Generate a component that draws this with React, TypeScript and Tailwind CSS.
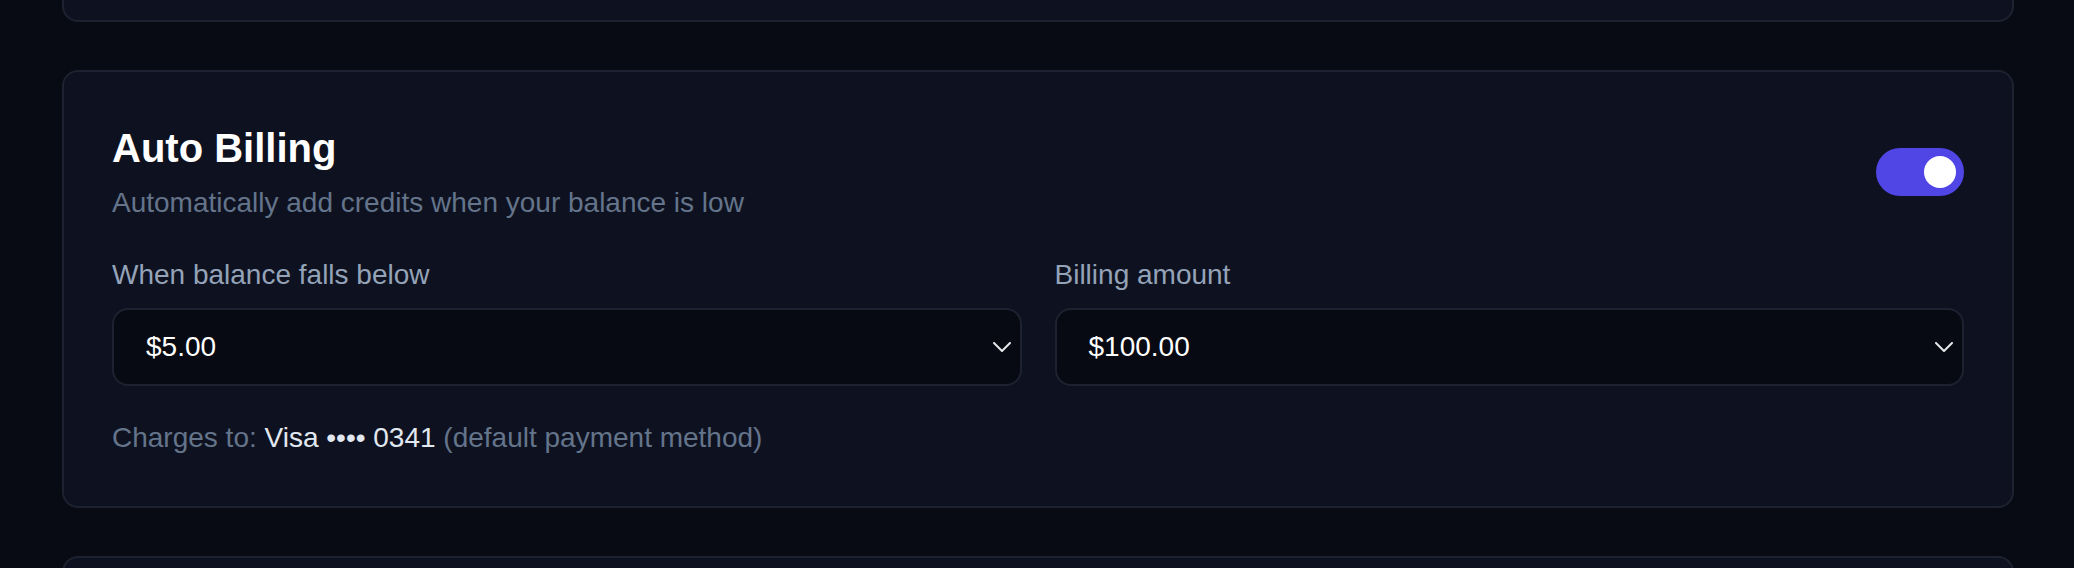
import React from "react";

function Chevron() {
  return (
    <svg width="18" height="10" viewBox="0 0 18 10" fill="none" className="shrink-0">
      <polyline points="1,1 9,9 17,1" stroke="#e5e7eb" strokeWidth="2" strokeLinecap="round" strokeLinejoin="round" />
    </svg>
  );
}

function SelectBox({ label, value }: { label: string; value: string }) {
  return (
    <div>
      <div className="mb-[13px] text-[28px] leading-[40px] text-[#94a3b8]">{label}</div>
      <div className="flex h-[78px] items-center justify-between rounded-[16px] border-2 border-[#1e2230] bg-[#070a12] pl-[32px] pr-[9px]">
        <span className="text-[28px] leading-[40px] text-white">{value}</span>
        <Chevron />
      </div>
    </div>
  );
}

export default function App() {
  return (
    <div className="h-[568px] overflow-hidden bg-[#080b13] pl-[62px] pr-[60px] font-['Liberation_Sans',Arial,sans-serif]">
      <div className="-mt-[100px] h-[122px] rounded-[16px] border-2 border-[#1e2230] bg-[#0e1220]" />
      <div className="mt-[48px] rounded-[16px] border-2 border-[#1e2230] bg-[#0e1220] p-[48px]">
        <div className="flex items-center justify-between">
          <div>
            <h2 className="text-[40px] font-bold leading-[56px] text-white">Auto Billing</h2>
            <p className="mt-[7px] text-[28px] leading-[40px] text-[#64748b]">
              Automatically add credits when your balance is low
            </p>
          </div>
          <div className="flex h-[48px] w-[88px] items-center justify-end rounded-full bg-[#4f46e5] pr-[8px]">
            <div className="h-[32px] w-[32px] rounded-full bg-white" />
          </div>
        </div>
        <div className="mt-[32px] grid grid-cols-2 gap-[33px]">
          <SelectBox label="When balance falls below" value="$5.00" />
          <SelectBox label="Billing amount" value="$100.00" />
        </div>
        <p className="mt-[32px] text-[28px] leading-[40px] text-[#64748b]">
          Charges to: <span className="text-[#e2e8f0]">Visa •••• 0341</span> (default payment method)
        </p>
      </div>
      <div className="mt-[48px] h-[200px] rounded-[16px] border-2 border-[#1e2230] bg-[#0e1220]" />
    </div>
  );
}
